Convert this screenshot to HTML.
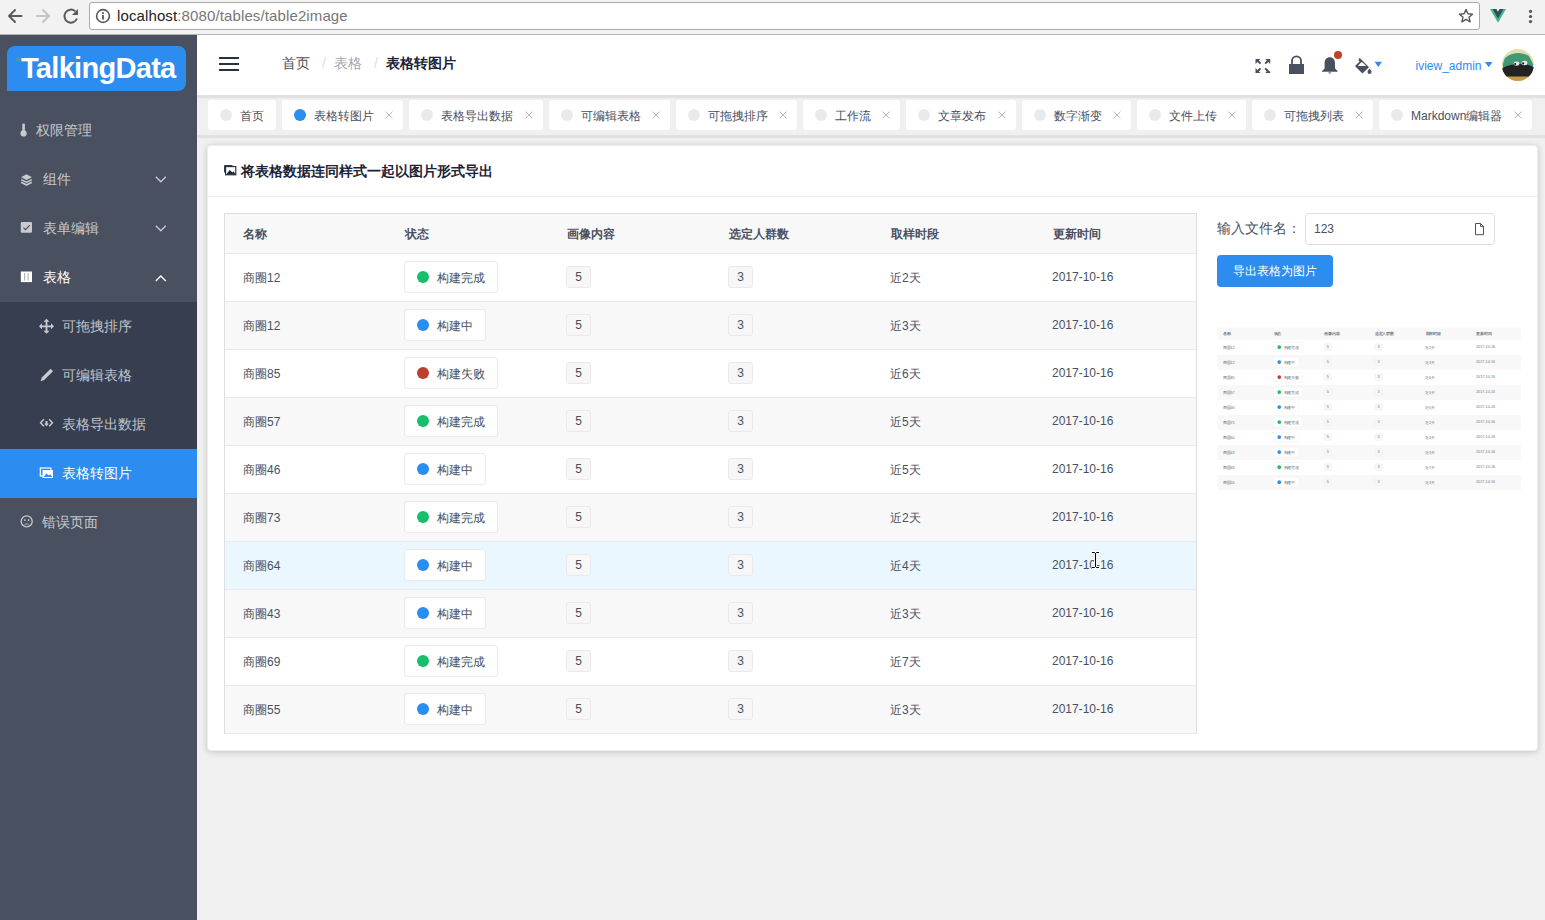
<!DOCTYPE html>
<html><head><meta charset="utf-8">
<style>
*{box-sizing:border-box;margin:0;padding:0}
html,body{width:1545px;height:920px;overflow:hidden;background:#f0f0f0;font-family:"Liberation Sans",sans-serif;font-size:12px;color:#495060}
.abs{position:absolute}
/* chrome */
#chrome{position:absolute;left:0;top:0;width:1545px;height:35px;background:#f2f2f2;border-bottom:1px solid #b4b4b4}
#addr{position:absolute;left:89px;top:2px;width:1391px;height:28px;background:#fff;border:1px solid #a9a9a9;border-radius:3px}
#addr .url{position:absolute;left:27px;top:4px;font-size:15px;color:#222;letter-spacing:0.12px}
#addr .url span{color:#777}
/* sidebar */
#side{position:absolute;left:0;top:35px;width:197px;height:885px;background:#495060}
#logo{position:absolute;left:7px;top:11px;width:179px;height:45px;background:#2d8cf0;border-radius:8px 8px 8px 0}
#logo .t{position:absolute;left:14px;top:6px;font-size:29px;font-weight:bold;color:#fff;letter-spacing:-0.7px}
#logo .dd{position:absolute;left:8.5px;top:11px;width:4px;height:4px;border-radius:1px;background:#3b9fb0}
.mi{position:absolute;left:0;width:197px;height:49px;color:rgba(255,255,255,.7);font-size:14px}
.mi .tx{position:absolute;top:16px;white-space:nowrap}
.mi .ic{position:absolute}
.sub{background:#363e4f}
.act{background:#2d8cf0;color:#fff}
/* header */
#hdr{position:absolute;left:197px;top:35px;width:1348px;height:60px;background:#fff;box-shadow:0 2px 1px 1px rgba(100,100,100,.1);z-index:3}
#tagsbar{position:absolute;left:197px;top:95px;width:1348px;height:40px;background:#f0f0f0;box-shadow:0 2px 1px 1px rgba(100,100,100,.1);z-index:1}
.tag{z-index:2}
.bc{position:absolute;top:20px;font-size:14px;white-space:nowrap}
/* tags */
.tag{position:absolute;top:100px;height:30px;background:#fff;border-radius:3px;font-size:12px;color:#495060}
.tag .dot{position:absolute;left:12px;top:9px;width:12px;height:12px;border-radius:50%;background:#e9eaec}
.tag .tx{position:absolute;left:32px;top:8px;white-space:nowrap}
.tag .x{position:absolute;top:11px}
/* card */
#card{position:absolute;left:207px;top:145px;width:1331px;height:606px;background:#fff;border:1px solid #eee;border-radius:4px;box-shadow:0 1px 6px rgba(0,0,0,.2)}
#cardh{position:absolute;left:0;top:0;width:1329px;height:51px;border-bottom:1px solid #e9eaec}
#cardh .t{position:absolute;left:33px;top:17px;font-size:14px;font-weight:bold;color:#1c2438;white-space:nowrap}
/* table */
.tbl{position:absolute;width:973px;height:521px;border:1px solid #dddee1;background:#fff;color:#495060}
.row{position:absolute;left:0;width:971px;height:48px;border-bottom:1px solid #e9eaec}
.row.h{height:40px;background:#f8f8f9;font-weight:bold}
.row.s{background:#f8f8f9}
.row.hv{background:#ebf7ff}
.c{position:absolute;white-space:nowrap}
.badge{position:absolute;height:32px;border:1px solid #e9eaec;border-radius:3px;background:#fff}
.badge .d{position:absolute;left:12px;top:9px;width:12px;height:12px;border-radius:50%}
.badge .bt{position:absolute;left:32px;top:8px;white-space:nowrap}
.num{position:absolute;width:25px;height:22px;border:1px solid #e9eaec;border-radius:3px;background:#f7f7f7;text-align:center;line-height:21px}
#preview{position:absolute;left:1217px;top:327px;width:973px;height:521px;transform:scale(0.3128);transform-origin:0 0}
#preview .tbl{border-color:transparent;color:#6f7685}
#preview .row{border-bottom-color:transparent}
/* right panel */
#lbl{position:absolute;left:1217px;top:220px;font-size:14px;white-space:nowrap}
#inp{position:absolute;left:1305px;top:213px;width:190px;height:32px;border:1px solid #dddee1;border-radius:4px;background:#fff}
#inp .v{position:absolute;left:8px;top:8px;font-size:12px}
#btn{position:absolute;left:1217px;top:255px;width:116px;height:32px;background:#2d8cf0;border-radius:4px;color:#fff;font-size:12px;text-align:center;line-height:32px}

</style></head>
<body>
<div id="chrome">
  <svg class="abs" style="left:0;top:0" width="90" height="34" viewBox="0 0 90 34">
    <g fill="none" stroke="#5a5a5a" stroke-width="2" stroke-linecap="round" stroke-linejoin="round">
      <path d="M21.5 16H9M15 10l-6 6 6 6"/>
    </g>
    <g fill="none" stroke="#c4c4c4" stroke-width="2" stroke-linecap="round" stroke-linejoin="round">
      <path d="M37 16h12.5M43 10l6 6-6 6"/>
    </g>
    <g fill="none" stroke="#5a5a5a" stroke-width="2">
      <path d="M77 18.5A6.5 6.5 0 1 1 75.2 11.2"/>
    </g>
    <path d="M78 9v6h-6z" fill="#5a5a5a"/>
  </svg>
  <div id="addr">
    <svg class="abs" style="left:4px;top:4px" width="18" height="18" viewBox="0 0 18 18">
      <circle cx="9" cy="9" r="6.4" fill="none" stroke="#5a5a5a" stroke-width="1.6"/>
      <rect x="8.1" y="8" width="1.8" height="4.6" fill="#5a5a5a"/>
      <rect x="8.1" y="5.2" width="1.8" height="1.8" fill="#5a5a5a"/>
    </svg>
    <div class="url">localhost<span>:8080/tables/table2image</span></div>
    <svg class="abs" style="left:1367px;top:4px" width="18" height="18" viewBox="0 0 18 18">
      <path d="M9 2.5l1.9 4.3 4.6.4-3.5 3 1.1 4.6L9 12.4l-4.1 2.4 1.1-4.6-3.5-3 4.6-.4z" fill="none" stroke="#555" stroke-width="1.4" stroke-linejoin="round"/>
    </svg>
  </div>
  <svg class="abs" style="left:1488px;top:7px" width="20" height="18" viewBox="0 0 20 18">
    <path d="M2 2h3.6L10 9.6 14.4 2H18L10 15.8z" fill="#41b883"/>
    <path d="M4.6 2h3.8L10 4.8 11.6 2h3.8L10 11.4z" fill="#35495e"/>
  </svg>
  <svg class="abs" style="left:1525px;top:7px" width="10" height="18" viewBox="0 0 10 18">
    <circle cx="5.5" cy="4.4" r="1.6" fill="#555"/><circle cx="5.5" cy="9.5" r="1.6" fill="#555"/><circle cx="5.5" cy="14.6" r="1.6" fill="#555"/>
  </svg>
</div>
<div id="side">
  <div id="logo"><div class="dd"></div><div class="t">TalkingData</div></div>
  <div class="mi" style="top:71px"><div class="tx" style="left:36px">权限管理</div></div>
  <div class="mi" style="top:120px"><div class="tx" style="left:43px">组件</div></div>
  <div class="mi" style="top:169px"><div class="tx" style="left:43px">表单编辑</div></div>
  <div class="mi" style="top:218px;color:#fff"><div class="tx" style="left:43px">表格</div></div>
  <div class="mi sub" style="top:267px"><div class="tx" style="left:62px">可拖拽排序</div></div>
  <div class="mi sub" style="top:316px"><div class="tx" style="left:62px">可编辑表格</div></div>
  <div class="mi sub" style="top:365px"><div class="tx" style="left:62px">表格导出数据</div></div>
  <div class="mi act" style="top:414px"><div class="tx" style="left:62px">表格转图片</div></div>
  <div class="mi" style="top:463px"><div class="tx" style="left:42px">错误页面</div></div>
</div>
<svg class="abs" style="left:0;top:0" width="197" height="560" viewBox="0 0 197 560">
  <g fill="#c8cacf">
    <!-- thermometer -->
    <rect x="22.3" y="123.5" width="2.6" height="9" rx="1.2"/>
    <circle cx="23.6" cy="133.4" r="3.1"/>
  </g>
  <g fill="none" stroke="#c8cacf" stroke-width="1.6" stroke-linejoin="round">
    <!-- layers -->
    <path d="M26.5 174.3 L32 177.2 L26.5 180.1 L21 177.2z" fill="#c8cacf" stroke="none"/>
    <path d="M21.2 179.6 L26.5 182.4 L31.8 179.6"/>
    <path d="M21.2 182.2 L26.5 185 L31.8 182.2"/>
  </g>
  <!-- checkbox -->
  <rect x="20.8" y="222" width="11.2" height="10.8" rx="1" fill="#c8cacf"/>
  <path d="M23.4 227.6l2.1 2.1 4.2-4.4" fill="none" stroke="#495060" stroke-width="1.2"/>
  <!-- table icon -->
  <rect x="20.8" y="271.5" width="11.2" height="10.6" fill="#fff"/>
  <rect x="24.2" y="273" width="0.9" height="7.6" fill="#9aa0ac"/>
  <rect x="27.6" y="273" width="0.9" height="7.6" fill="#9aa0ac"/>
  <!-- chevrons -->
  <g fill="none" stroke="#c8cacf" stroke-width="1.3">
    <path d="M155.8 176.8l5 5 5-5"/>
    <path d="M155.8 225.8l5 5 5-5"/>
  </g>
  <path d="M155.8 281l5-5 5 5" fill="none" stroke="#fff" stroke-width="1.3"/>
  <!-- move -->
  <g fill="#c8cacf">
    <path d="M46.5 318.8l3 3h-2.1v3.6h3.6v-2.1l3 3-3 3v-2.1h-3.6v3.6h2.1l-3 3-3-3h2.1v-3.6h-3.6v2.1l-3-3 3-3v2.1h3.6v-3.6h-2.1z"/>
  </g>
  <!-- pencil -->
  <path d="M50.6 368.8l2.4 2.4-8.8 8.8-3.6 1.2 1.2-3.6z" fill="#c8cacf"/>
  <!-- code -->
  <g fill="none" stroke="#c8cacf" stroke-width="1.5">
    <path d="M43.8 419.2l-3.2 3.5 3.2 3.5M49.2 419.2l3.2 3.5-3.2 3.5"/>
  </g>
  <path d="M45.5 421v2.5h-1.2l2.2 3 2.2-3h-1.2v-2.5z" fill="#c8cacf"/>
  <!-- image -->
  <rect x="40.3" y="468" width="10.5" height="8" fill="none" stroke="#fff" stroke-width="1.2"/>
  <rect x="42.5" y="470" width="10.5" height="8" fill="#fff"/>
  <path d="M43.5 477l3-3.5 2 2 1.5-1.2 2.5 2.7z" fill="#2d8cf0"/>
  <!-- sad face -->
  <circle cx="26.7" cy="521.4" r="5.5" fill="none" stroke="#c8cacf" stroke-width="1.3"/>
  <rect x="24.2" y="519.2" width="1.3" height="1.8" fill="#c8cacf"/>
  <rect x="27.9" y="519.2" width="1.3" height="1.8" fill="#c8cacf"/>
  <path d="M23.9 524.5q2.8-2.2 5.6 0z" fill="#c8cacf"/>
</svg>
<div id="hdr">
  <svg class="abs" style="left:0;top:0" width="1348" height="60" viewBox="197 35 1348 60">
  <!-- hamburger -->
  <g fill="#283042">
    <rect x="219" y="57" width="20" height="2"/>
    <rect x="219" y="63" width="20" height="2"/>
    <rect x="219" y="69" width="20" height="2"/>
  </g>
  <!-- fullscreen -->
  <g fill="#495060">
    <path d="M1255.5 59h5l-1.6 1.6 2.3 2.3-1.4 1.4-2.3-2.3-2 2z"/>
    <path d="M1270.2 59h-5l1.6 1.6-2.3 2.3 1.4 1.4 2.3-2.3 2 2z"/>
    <path d="M1255.5 73h5l-1.6-1.6 2.3-2.3-1.4-1.4-2.3 2.3-2-2z"/>
    <path d="M1270.2 73h-5l1.6-1.6-2.3-2.3 1.4-1.4 2.3 2.3 2 2z"/>
  </g>
  <!-- lock -->
  <path d="M1292 64v-3.2a4.5 4.5 0 0 1 9 0V64" fill="none" stroke="#495060" stroke-width="1.8"/>
  <rect x="1289" y="64" width="15" height="10" fill="#495060"/>
  <!-- bell -->
  <path d="M1329.8 57.2c-3.4 0-5.2 2.6-5.2 6v5.3l-2.6 2.4v0.8h15.6v-0.8l-2.6-2.4v-5.3c0-3.4-1.8-6-5.2-6z" fill="#495060"/>
  <path d="M1328 72.6h3.6q-1.8 2.2-3.6 0z" fill="#495060"/>
  <circle cx="1338" cy="55" r="4" fill="#c0412b"/>
  <!-- paint bucket -->
  <path d="M1359.6 57.8l9.4 9.4-6.6 6.2-7.4-7.4 4.6-4.6-1.2-1.2z" fill="#495060"/>
  <path d="M1357.8 66h8.4l-3.6-3.6-1.4-0.2z" fill="#fff"/>
  <path d="M1369.5 68.5q-2 2.4-2 3.4a2 2 0 0 0 4 0q0-1-2-3.4z" fill="#495060"/>
  <path d="M1374.6 61.8h7.4l-3.7 5.2z" fill="#2d8cf0"/>
  <!-- user dropdown triangle -->
  <path d="M1485 62h7.4l-3.7 5.2z" fill="#2d8cf0"/>
  <!-- avatar -->
  <defs><clipPath id="av"><circle cx="1517.8" cy="65" r="16"/></clipPath></defs>
  <g clip-path="url(#av)">
    <rect x="1500" y="48" width="36" height="36" fill="#e3dcae"/>
    <path d="M1503 64q1-8 9-10 9-3 17 2l4 8v4h-30z" fill="#3f9a74"/>
    <path d="M1501 70q3-5 17-6 14 0 17 5l1 8h-35z" fill="#232326"/>
    <rect x="1500" y="76.5" width="36" height="8" fill="#c49a45"/>
    <ellipse cx="1516.5" cy="63.6" rx="2.8" ry="2.2" fill="#ececec"/>
    <ellipse cx="1524.5" cy="63" rx="2.8" ry="2.2" fill="#ececec"/>
    <circle cx="1515.2" cy="64" r="1.1" fill="#222"/>
    <circle cx="1523.2" cy="63.4" r="1.1" fill="#222"/>
  </g>
</svg>
<div class="bc" style="left:85px;color:#495060">首页</div>
  <div class="bc" style="left:125px;color:#dddee1">/</div>
  <div class="bc" style="left:137px;color:#9ea7b4">表格</div>
  <div class="bc" style="left:177px;color:#dddee1">/</div>
  <div class="bc" style="left:189px;color:#1c2438;font-weight:bold">表格转图片</div>
  <div class="abs" style="left:1218.5px;top:24px;font-size:12px;color:#2d8cf0;white-space:nowrap">iview_admin</div>
</div>
<div id="tagsbar"></div>
<div class="tag" style="left:208px;width:68px"><div class="dot" style=""></div><div class="tx">首页</div></div>
<div class="tag" style="left:282px;width:121px"><div class="dot" style="background:#2d8cf0"></div><div class="tx">表格转图片</div><svg class="x" style="left:103px" width="8" height="8" viewBox="0 0 8 8"><path d="M0.5 0.5l7 7M7.5 0.5l-7 7" stroke="#b3beb8" stroke-width="1"/></svg></div>
<div class="tag" style="left:409px;width:134px"><div class="dot" style=""></div><div class="tx">表格导出数据</div><svg class="x" style="left:116px" width="8" height="8" viewBox="0 0 8 8"><path d="M0.5 0.5l7 7M7.5 0.5l-7 7" stroke="#b3beb8" stroke-width="1"/></svg></div>
<div class="tag" style="left:549px;width:121px"><div class="dot" style=""></div><div class="tx">可编辑表格</div><svg class="x" style="left:103px" width="8" height="8" viewBox="0 0 8 8"><path d="M0.5 0.5l7 7M7.5 0.5l-7 7" stroke="#b3beb8" stroke-width="1"/></svg></div>
<div class="tag" style="left:676px;width:121px"><div class="dot" style=""></div><div class="tx">可拖拽排序</div><svg class="x" style="left:103px" width="8" height="8" viewBox="0 0 8 8"><path d="M0.5 0.5l7 7M7.5 0.5l-7 7" stroke="#b3beb8" stroke-width="1"/></svg></div>
<div class="tag" style="left:803px;width:97px"><div class="dot" style=""></div><div class="tx">工作流</div><svg class="x" style="left:79px" width="8" height="8" viewBox="0 0 8 8"><path d="M0.5 0.5l7 7M7.5 0.5l-7 7" stroke="#b3beb8" stroke-width="1"/></svg></div>
<div class="tag" style="left:906px;width:110px"><div class="dot" style=""></div><div class="tx">文章发布</div><svg class="x" style="left:92px" width="8" height="8" viewBox="0 0 8 8"><path d="M0.5 0.5l7 7M7.5 0.5l-7 7" stroke="#b3beb8" stroke-width="1"/></svg></div>
<div class="tag" style="left:1022px;width:109px"><div class="dot" style=""></div><div class="tx">数字渐变</div><svg class="x" style="left:91px" width="8" height="8" viewBox="0 0 8 8"><path d="M0.5 0.5l7 7M7.5 0.5l-7 7" stroke="#b3beb8" stroke-width="1"/></svg></div>
<div class="tag" style="left:1137px;width:109px"><div class="dot" style=""></div><div class="tx">文件上传</div><svg class="x" style="left:91px" width="8" height="8" viewBox="0 0 8 8"><path d="M0.5 0.5l7 7M7.5 0.5l-7 7" stroke="#b3beb8" stroke-width="1"/></svg></div>
<div class="tag" style="left:1252px;width:121px"><div class="dot" style=""></div><div class="tx">可拖拽列表</div><svg class="x" style="left:103px" width="8" height="8" viewBox="0 0 8 8"><path d="M0.5 0.5l7 7M7.5 0.5l-7 7" stroke="#b3beb8" stroke-width="1"/></svg></div>
<div class="tag" style="left:1379px;width:153px"><div class="dot" style=""></div><div class="tx">Markdown编辑器</div><svg class="x" style="left:135px" width="8" height="8" viewBox="0 0 8 8"><path d="M0.5 0.5l7 7M7.5 0.5l-7 7" stroke="#b3beb8" stroke-width="1"/></svg></div>
<div id="card"><div id="cardh"><div class="t">将表格数据连同样式一起以图片形式导出</div></div></div>
<svg class="abs" style="left:222px;top:163px" width="16" height="14" viewBox="222 163 16 14">
  <path d="M224.5 172.5v-7h8" fill="none" stroke="#1c2438" stroke-width="0.9"/>
  <rect x="225.6" y="166.6" width="10.2" height="8.2" fill="#fff" stroke="#1c2438" stroke-width="1.1"/>
  <path d="M226 174.6l3.8-4.6 2.6 2.6 1.2-1 2.2 3z" fill="#1c2438"/>
</svg>
<div class="tbl" style="left:224px;top:213px">
<div class="row h" style="top:0">
<div class="c" style="left:18px;top:12px">名称</div>
<div class="c" style="left:180px;top:12px">状态</div>
<div class="c" style="left:342px;top:12px">画像内容</div>
<div class="c" style="left:504px;top:12px">选定人群数</div>
<div class="c" style="left:666px;top:12px">取样时段</div>
<div class="c" style="left:828px;top:12px">更新时间</div>
</div>
<div class="row" style="top:40px">
<div class="c" style="left:18px;top:16px">商圈12</div>
<div class="badge" style="left:179px;top:7px;width:94px"><div class="d" style="background:#19be6b"></div><div class="bt">构建完成</div></div>
<div class="num" style="left:341px;top:12px">5</div>
<div class="num" style="left:503px;top:12px">3</div>
<div class="c" style="left:665px;top:16px">近2天</div>
<div class="c" style="left:827px;top:16px">2017-10-16</div>
</div>
<div class="row s" style="top:88px">
<div class="c" style="left:18px;top:16px">商圈12</div>
<div class="badge" style="left:179px;top:7px;width:82px"><div class="d" style="background:#2d8cf0"></div><div class="bt">构建中</div></div>
<div class="num" style="left:341px;top:12px">5</div>
<div class="num" style="left:503px;top:12px">3</div>
<div class="c" style="left:665px;top:16px">近3天</div>
<div class="c" style="left:827px;top:16px">2017-10-16</div>
</div>
<div class="row" style="top:136px">
<div class="c" style="left:18px;top:16px">商圈85</div>
<div class="badge" style="left:179px;top:7px;width:94px"><div class="d" style="background:#bb402e"></div><div class="bt">构建失败</div></div>
<div class="num" style="left:341px;top:12px">5</div>
<div class="num" style="left:503px;top:12px">3</div>
<div class="c" style="left:665px;top:16px">近6天</div>
<div class="c" style="left:827px;top:16px">2017-10-16</div>
</div>
<div class="row s" style="top:184px">
<div class="c" style="left:18px;top:16px">商圈57</div>
<div class="badge" style="left:179px;top:7px;width:94px"><div class="d" style="background:#19be6b"></div><div class="bt">构建完成</div></div>
<div class="num" style="left:341px;top:12px">5</div>
<div class="num" style="left:503px;top:12px">3</div>
<div class="c" style="left:665px;top:16px">近5天</div>
<div class="c" style="left:827px;top:16px">2017-10-16</div>
</div>
<div class="row" style="top:232px">
<div class="c" style="left:18px;top:16px">商圈46</div>
<div class="badge" style="left:179px;top:7px;width:82px"><div class="d" style="background:#2d8cf0"></div><div class="bt">构建中</div></div>
<div class="num" style="left:341px;top:12px">5</div>
<div class="num" style="left:503px;top:12px">3</div>
<div class="c" style="left:665px;top:16px">近5天</div>
<div class="c" style="left:827px;top:16px">2017-10-16</div>
</div>
<div class="row s" style="top:280px">
<div class="c" style="left:18px;top:16px">商圈73</div>
<div class="badge" style="left:179px;top:7px;width:94px"><div class="d" style="background:#19be6b"></div><div class="bt">构建完成</div></div>
<div class="num" style="left:341px;top:12px">5</div>
<div class="num" style="left:503px;top:12px">3</div>
<div class="c" style="left:665px;top:16px">近2天</div>
<div class="c" style="left:827px;top:16px">2017-10-16</div>
</div>
<div class="row hv" style="top:328px">
<div class="c" style="left:18px;top:16px">商圈64</div>
<div class="badge" style="left:179px;top:7px;width:82px"><div class="d" style="background:#2d8cf0"></div><div class="bt">构建中</div></div>
<div class="num" style="left:341px;top:12px">5</div>
<div class="num" style="left:503px;top:12px">3</div>
<div class="c" style="left:665px;top:16px">近4天</div>
<div class="c" style="left:827px;top:16px">2017-10-16</div>
</div>
<div class="row s" style="top:376px">
<div class="c" style="left:18px;top:16px">商圈43</div>
<div class="badge" style="left:179px;top:7px;width:82px"><div class="d" style="background:#2d8cf0"></div><div class="bt">构建中</div></div>
<div class="num" style="left:341px;top:12px">5</div>
<div class="num" style="left:503px;top:12px">3</div>
<div class="c" style="left:665px;top:16px">近3天</div>
<div class="c" style="left:827px;top:16px">2017-10-16</div>
</div>
<div class="row" style="top:424px">
<div class="c" style="left:18px;top:16px">商圈69</div>
<div class="badge" style="left:179px;top:7px;width:94px"><div class="d" style="background:#19be6b"></div><div class="bt">构建完成</div></div>
<div class="num" style="left:341px;top:12px">5</div>
<div class="num" style="left:503px;top:12px">3</div>
<div class="c" style="left:665px;top:16px">近7天</div>
<div class="c" style="left:827px;top:16px">2017-10-16</div>
</div>
<div class="row s" style="top:472px">
<div class="c" style="left:18px;top:16px">商圈55</div>
<div class="badge" style="left:179px;top:7px;width:82px"><div class="d" style="background:#2d8cf0"></div><div class="bt">构建中</div></div>
<div class="num" style="left:341px;top:12px">5</div>
<div class="num" style="left:503px;top:12px">3</div>
<div class="c" style="left:665px;top:16px">近3天</div>
<div class="c" style="left:827px;top:16px">2017-10-16</div>
</div>
</div>
<div id="lbl">输入文件名：</div>
<div id="inp"><div class="v">123</div>
<svg class="abs" style="left:166px;top:8px" width="14" height="14" viewBox="0 0 14 14">
  <path d="M3.5 1.5h5l3 3v8.2h-8z" fill="#fff" stroke="#495060" stroke-width="1"/>
  <path d="M8.5 1.5v3h3" fill="none" stroke="#495060" stroke-width="0.9"/>
</svg></div>
<div id="btn">导出表格为图片</div>
<svg class="abs" style="left:1088px;top:549px;z-index:9" width="14" height="22" viewBox="1088 549 14 22">
  <g fill="none" stroke="#fff" stroke-width="3">
    <path d="M1092 552.5h7M1095.5 552.5v15M1092 567.5h7"/>
  </g>
  <g fill="none" stroke="#000" stroke-width="1.1">
    <path d="M1092 552.5h2.8M1096.2 552.5h2.8M1095.5 553v14M1092 567.5h2.8M1096.2 567.5h2.8"/>
  </g>
</svg>
<div id="preview"><div class="tbl" style="left:0;top:0">
<div class="row h" style="top:0">
<div class="c" style="left:18px;top:12px">名称</div>
<div class="c" style="left:180px;top:12px">状态</div>
<div class="c" style="left:342px;top:12px">画像内容</div>
<div class="c" style="left:504px;top:12px">选定人群数</div>
<div class="c" style="left:666px;top:12px">取样时段</div>
<div class="c" style="left:828px;top:12px">更新时间</div>
</div>
<div class="row" style="top:40px">
<div class="c" style="left:18px;top:16px">商圈12</div>
<div class="badge" style="left:179px;top:7px;width:94px"><div class="d" style="background:#19be6b"></div><div class="bt">构建完成</div></div>
<div class="num" style="left:341px;top:12px">5</div>
<div class="num" style="left:503px;top:12px">3</div>
<div class="c" style="left:665px;top:16px">近2天</div>
<div class="c" style="left:827px;top:16px">2017-10-16</div>
</div>
<div class="row s" style="top:88px">
<div class="c" style="left:18px;top:16px">商圈12</div>
<div class="badge" style="left:179px;top:7px;width:82px"><div class="d" style="background:#2d8cf0"></div><div class="bt">构建中</div></div>
<div class="num" style="left:341px;top:12px">5</div>
<div class="num" style="left:503px;top:12px">3</div>
<div class="c" style="left:665px;top:16px">近3天</div>
<div class="c" style="left:827px;top:16px">2017-10-16</div>
</div>
<div class="row" style="top:136px">
<div class="c" style="left:18px;top:16px">商圈85</div>
<div class="badge" style="left:179px;top:7px;width:94px"><div class="d" style="background:#bb402e"></div><div class="bt">构建失败</div></div>
<div class="num" style="left:341px;top:12px">5</div>
<div class="num" style="left:503px;top:12px">3</div>
<div class="c" style="left:665px;top:16px">近6天</div>
<div class="c" style="left:827px;top:16px">2017-10-16</div>
</div>
<div class="row s" style="top:184px">
<div class="c" style="left:18px;top:16px">商圈57</div>
<div class="badge" style="left:179px;top:7px;width:94px"><div class="d" style="background:#19be6b"></div><div class="bt">构建完成</div></div>
<div class="num" style="left:341px;top:12px">5</div>
<div class="num" style="left:503px;top:12px">3</div>
<div class="c" style="left:665px;top:16px">近5天</div>
<div class="c" style="left:827px;top:16px">2017-10-16</div>
</div>
<div class="row" style="top:232px">
<div class="c" style="left:18px;top:16px">商圈46</div>
<div class="badge" style="left:179px;top:7px;width:82px"><div class="d" style="background:#2d8cf0"></div><div class="bt">构建中</div></div>
<div class="num" style="left:341px;top:12px">5</div>
<div class="num" style="left:503px;top:12px">3</div>
<div class="c" style="left:665px;top:16px">近5天</div>
<div class="c" style="left:827px;top:16px">2017-10-16</div>
</div>
<div class="row s" style="top:280px">
<div class="c" style="left:18px;top:16px">商圈73</div>
<div class="badge" style="left:179px;top:7px;width:94px"><div class="d" style="background:#19be6b"></div><div class="bt">构建完成</div></div>
<div class="num" style="left:341px;top:12px">5</div>
<div class="num" style="left:503px;top:12px">3</div>
<div class="c" style="left:665px;top:16px">近2天</div>
<div class="c" style="left:827px;top:16px">2017-10-16</div>
</div>
<div class="row" style="top:328px">
<div class="c" style="left:18px;top:16px">商圈64</div>
<div class="badge" style="left:179px;top:7px;width:82px"><div class="d" style="background:#2d8cf0"></div><div class="bt">构建中</div></div>
<div class="num" style="left:341px;top:12px">5</div>
<div class="num" style="left:503px;top:12px">3</div>
<div class="c" style="left:665px;top:16px">近4天</div>
<div class="c" style="left:827px;top:16px">2017-10-16</div>
</div>
<div class="row s" style="top:376px">
<div class="c" style="left:18px;top:16px">商圈43</div>
<div class="badge" style="left:179px;top:7px;width:82px"><div class="d" style="background:#2d8cf0"></div><div class="bt">构建中</div></div>
<div class="num" style="left:341px;top:12px">5</div>
<div class="num" style="left:503px;top:12px">3</div>
<div class="c" style="left:665px;top:16px">近3天</div>
<div class="c" style="left:827px;top:16px">2017-10-16</div>
</div>
<div class="row" style="top:424px">
<div class="c" style="left:18px;top:16px">商圈69</div>
<div class="badge" style="left:179px;top:7px;width:94px"><div class="d" style="background:#19be6b"></div><div class="bt">构建完成</div></div>
<div class="num" style="left:341px;top:12px">5</div>
<div class="num" style="left:503px;top:12px">3</div>
<div class="c" style="left:665px;top:16px">近7天</div>
<div class="c" style="left:827px;top:16px">2017-10-16</div>
</div>
<div class="row s" style="top:472px">
<div class="c" style="left:18px;top:16px">商圈55</div>
<div class="badge" style="left:179px;top:7px;width:82px"><div class="d" style="background:#2d8cf0"></div><div class="bt">构建中</div></div>
<div class="num" style="left:341px;top:12px">5</div>
<div class="num" style="left:503px;top:12px">3</div>
<div class="c" style="left:665px;top:16px">近3天</div>
<div class="c" style="left:827px;top:16px">2017-10-16</div>
</div>
</div></div>

</body></html>
